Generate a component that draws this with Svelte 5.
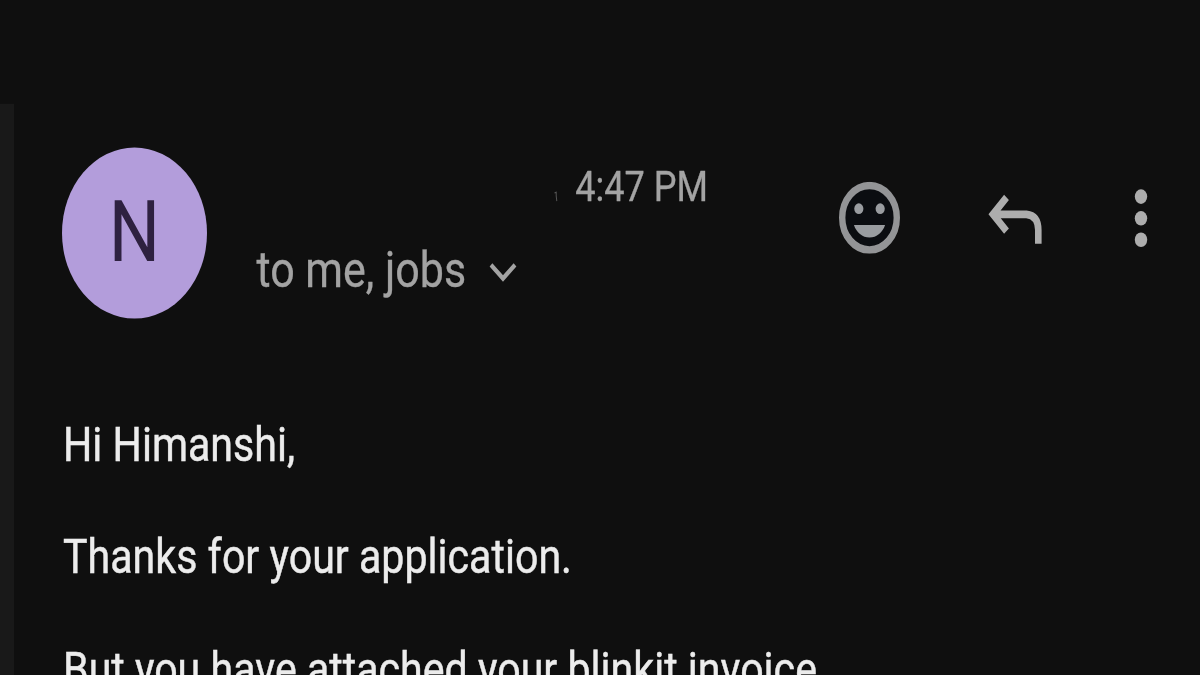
<script lang="ts">
	const sender = { initial: 'N', time: '4:47 PM', recipients: 'to me, jobs' };

	const lines: string[] = [
		'Hi Himanshi,',
		'Thanks for your application.',
		'But you have attached your blinkit invoice'
	];
</script>

<div class="frame">
	<div class="screen">
		<aside class="rail"></aside>

		<main class="mail">
			<header>
				<div class="avatar">{sender.initial}</div>

				<div class="meta">
					<div class="time">
						<svg class="tick" viewBox="0 0 4 9" aria-hidden="true">
							<path d="M0.5 1.5L2.2 0.8V4L2.8 8.5" />
						</svg>
						<span>{sender.time}</span>
					</div>
					<div class="recipients">
						<span>{sender.recipients}</span>
						<svg class="chevron" viewBox="0 0 28 17" aria-hidden="true">
							<path d="M2 2.5L14 14L26 2.5" />
						</svg>
					</div>
				</div>

				<div class="actions">
					<svg class="smile" viewBox="2 2 20 20" aria-label="React">
						<circle class="ring" cx="12" cy="12" r="8.95" />
						<circle cx="8.5" cy="9.5" r="1.5" />
						<circle cx="15.5" cy="9.5" r="1.5" />
						<path d="M12 17.5c2.33 0 4.31-1.46 5.11-3.5H6.89c.8 2.04 2.78 3.5 5.11 3.5z" />
					</svg>
					<svg class="reply" viewBox="0 0 62 50" aria-label="Reply">
						<path d="M22.5 7.3L9 21.6L22.5 35.9M9 21.6H42.5Q54.3 22.6 54.3 35V46.5" />
					</svg>
					<svg class="more" viewBox="0 0 14 50" aria-label="More">
						<circle cx="7" cy="6.6" r="6.2" />
						<circle cx="7" cy="25" r="6.2" />
						<circle cx="7" cy="43.2" r="6.2" />
					</svg>
				</div>
			</header>

			<article>
				{#each lines as line}
					<p>{line}</p>
				{/each}
			</article>
		</main>
	</div>
</div>

<style>
	:global(body) {
		background: #0f0f0f;
	}

	.frame {
		width: 1200px;
		height: 675px;
		overflow: hidden;
		background: #0f0f0f;
	}

	/* the whole view is stretched taller than it is wide */
	.screen {
		display: flex;
		height: 573px;
		font-family: Roboto, 'Liberation Sans', sans-serif;
		transform: scaleY(1.18);
		transform-origin: 0 0;
	}

	.rail {
		flex: none;
		width: 14px;
		margin-top: 88px;
		background: #191919;
	}

	.mail {
		flex: 1;
		padding: 124.6px 52px 0 48px;
	}

	header {
		display: flex;
		height: 145px;
	}

	.avatar {
		flex: none;
		display: flex;
		align-items: center;
		justify-content: center;
		width: 145px;
		height: 145px;
		border-radius: 50%;
		background: #b39ddb;
		color: #2e2140;
		font-size: 72px;
		line-height: 1;
		padding-bottom: 1px;
		box-sizing: border-box;
	}

	.meta {
		display: flex;
		flex-direction: column;
		gap: 23.6px;
		width: 451.5px;
		margin-left: 49.5px;
		padding-top: 11px;
		color: #a3a3a3;
		white-space: nowrap;
		-webkit-text-stroke: 0.3px #a3a3a3;
	}

	.time {
		display: flex;
		justify-content: flex-end;
		align-items: center;
		gap: 17px;
		font-size: 36.1px;
		line-height: 44px;
	}

	.recipients {
		display: flex;
		align-items: center;
		gap: 22.5px;
		font-size: 43px;
		line-height: 51px;
	}

	svg {
		flex: none;
		display: block;
	}

	.tick {
		width: 4px;
		height: 9px;
		margin-top: 17px;
		fill: none;
		stroke: #555;
	}

	.chevron {
		width: 28px;
		height: 17px;
		margin-top: 3px;
		fill: none;
		stroke: #a3a3a3;
		stroke-width: 4;
	}

	.actions {
		flex: 1;
		display: flex;
		align-items: center;
		justify-content: flex-end;
		height: 120.6px;
		fill: #adadad;
	}

	.smile {
		width: 61px;
		height: 61px;
		fill: #999ca0;
	}

	.ring {
		fill: #0b0d11;
		stroke: #939496;
		stroke-width: 2.1;
	}

	.reply {
		width: 62px;
		height: 50px;
		margin-left: 83.5px;
		fill: none;
		stroke: #adadad;
		stroke-width: 6.6;
	}

	.more {
		width: 14px;
		height: 50px;
		margin-left: 88.5px;
	}

	article {
		padding: 83.4px 0 0 1px;
		color: #ececec;
		font-size: 41.15px;
		line-height: 48px;
		white-space: nowrap;
		-webkit-text-stroke: 0.4px #ececec;
	}

	p {
		margin: 0 0 47.2px;
	}
</style>
